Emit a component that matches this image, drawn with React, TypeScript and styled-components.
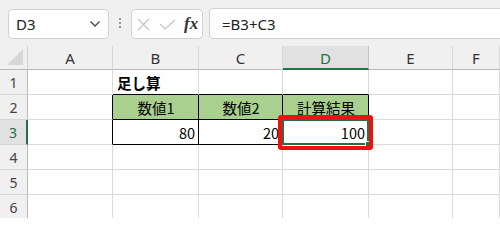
import styled, { createGlobalStyle } from "styled-components";

const GlobalStyle = createGlobalStyle`
  html, body {
    margin: 0;
    padding: 0;
    background: #ffffff;
    overflow: hidden;
  }
  * {
    box-sizing: border-box;
  }
`;

const GRID = "#dadada";
const INK = "#000000";
const GREEN = "#217346";

const columns = ["A", "B", "C", "D", "E", "F"];

type CellData = {
  text?: string;
  align?: "left" | "center" | "right";
  bold?: boolean;
  fill?: string;
  right?: string;
  bottom?: string;
  selected?: boolean;
};

const rows: CellData[][] = [
  [
    { right: GRID },
    { text: "足し算", bold: true, bottom: INK },
    { bottom: INK },
    { bottom: INK },
    {},
    {},
  ],
  [
    { right: INK },
    { text: "数値1", align: "center", fill: "#a9d08e", right: INK, bottom: INK },
    { text: "数値2", align: "center", fill: "#a9d08e", right: INK, bottom: INK },
    { text: "計算結果", align: "center", fill: "#a9d08e", right: INK, bottom: INK },
    {},
    {},
  ],
  [
    { right: INK },
    { text: "80", align: "right", right: INK, bottom: INK },
    { text: "20", align: "right", right: INK, bottom: INK },
    { text: "100", align: "right", right: INK, bottom: INK, selected: true },
    {},
    {},
  ],
  [{}, {}, {}, {}, {}, {}],
  [{}, {}, {}, {}, {}, {}],
  [{}, {}, {}, {}, {}, {}],
];

const App = () => {
  return (
    <Page>
      <GlobalStyle />
      <FormulaBar>
        <NameBox>
          <span>D3</span>
          <svg width="12" height="8" viewBox="0 0 12 8">
            <path d="M1.5 1.5 L6 6 L10.5 1.5" fill="none" stroke="#444" strokeWidth="1.3" />
          </svg>
        </NameBox>
        <Grip>
          <Dot />
          <Dot />
          <Dot />
        </Grip>
        <FxBox>
          <svg width="13" height="13" viewBox="0 0 13 13">
            <path d="M1 1 L12 12 M12 1 L1 12" stroke="#c4c4c4" strokeWidth="1.2" fill="none" />
          </svg>
          <svg width="17" height="11" viewBox="0 0 17 11">
            <path d="M1 5 L6 10 L16 1" stroke="#c4c4c4" strokeWidth="1.2" fill="none" />
          </svg>
          <Fx>fx</Fx>
        </FxBox>
        <FormulaInput>=B3+C3</FormulaInput>
      </FormulaBar>
      <Sheet>
        <Corner>
          <svg width="18" height="18" viewBox="0 0 18 18">
            <path d="M17 1 L17 17 L1 17 Z" fill="#d7d7d7" />
          </svg>
        </Corner>
        {columns.map((c) => (
          <ColHeader key={c} $active={c === "D"}>
            {c}
          </ColHeader>
        ))}
        {rows.map((row, r) => (
          <Row key={r} row={row} index={r + 1} />
        ))}
      </Sheet>
    </Page>
  );
};

const Row = ({ row, index }: { row: CellData[]; index: number }) => {
  return (
    <>
      <RowHeader $active={index === 3}>{index}</RowHeader>
      {row.map((cell, i) => (
        <Cell
          key={i}
          $align={cell.align || "left"}
          $bold={!!cell.bold}
          $fill={cell.fill || "#ffffff"}
          $right={cell.right || GRID}
          $bottom={cell.bottom || GRID}
          $raised={!!cell.selected}
        >
          {cell.text}
          {cell.selected && (
            <>
              <Selection>
                <FillHandle />
              </Selection>
              <Highlight />
            </>
          )}
        </Cell>
      ))}
    </>
  );
};

const Page = styled.div`
  width: 500px;
  height: 218px;
  overflow: hidden;
  background: #ffffff;
`;

const FormulaBar = styled.div`
  height: 46px;
  background: #f0f0f0;
  display: flex;
  align-items: flex-start;
  padding: 8px 0 0 8px;
  font-family: "Noto Sans", "Open Sans", sans-serif;
`;

const NameBox = styled.div`
  width: 101px;
  height: 30px;
  margin-top: 1px;
  background: #ffffff;
  border: 1px solid #d1d1d1;
  border-radius: 4px;
  display: flex;
  align-items: center;
  justify-content: space-between;
  padding: 0 7px 0 7px;
  font-size: 15px;
  color: #222;
`;

const Grip = styled.div`
  width: 22px;
  height: 30px;
  display: flex;
  flex-direction: column;
  align-items: center;
  justify-content: center;
  gap: 2px;
`;

const Dot = styled.div`
  width: 2px;
  height: 2px;
  border-radius: 1px;
  background: #777;
`;

const FxBox = styled.div`
  width: 72px;
  height: 30px;
  margin-top: 1px;
  background: #ffffff;
  border: 1px solid #d1d1d1;
  border-radius: 4px;
  display: flex;
  align-items: center;
  gap: 9px;
  padding-left: 5px;
`;

const Fx = styled.span`
  font-family: "Liberation Serif", serif;
  font-style: italic;
  font-weight: bold;
  font-size: 17px;
  color: #333;
  margin-left: -1px;
`;

const FormulaInput = styled.div`
  flex: 1;
  height: 31px;
  margin-left: 6px;
  margin-right: -8px;
  background: #ffffff;
  border: 1px solid #d1d1d1;
  border-radius: 4px;
  display: flex;
  align-items: center;
  padding-left: 12px;
  font-size: 15px;
  color: #222;
`;

const Sheet = styled.div`
  display: grid;
  grid-template-columns: 28px 85px 86px 84px 86px 84px 1fr;
  grid-template-rows: 24px;
  grid-auto-rows: 25px;
  font-family: "Noto Sans CJK JP", "Noto Sans", sans-serif;
`;

const Corner = styled.div`
  background: #f0f0f0;
  border-right: 1px solid #d0d0d0;
  border-bottom: 1px solid #b8b8b8;
  display: flex;
  align-items: flex-end;
  justify-content: flex-end;
  padding: 0 3px 3px 0;
`;

const ColHeader = styled.div<{ $active: boolean }>`
  background: ${(p) => (p.$active ? "#e1e1e1" : "#f0f0f0")};
  border-right: 1px solid ${(p) => (p.$active ? "#c6c6c6" : "#d6d6d6")};
  border-bottom: ${(p) => (p.$active ? `2px solid ${GREEN}` : "1px solid #b8b8b8")};
  color: ${(p) => (p.$active ? GREEN : "#333")};
  font-family: "Noto Sans", "Open Sans", sans-serif;
  font-size: 15px;
  display: flex;
  align-items: center;
  justify-content: center;
  padding-top: ${(p) => (p.$active ? "1px" : "0")};
`;

const RowHeader = styled.div<{ $active: boolean }>`
  background: ${(p) => (p.$active ? "#e1e1e1" : "#f0f0f0")};
  border-right: ${(p) => (p.$active ? `2px solid ${GREEN}` : "1px solid #b8b8b8")};
  border-bottom: 1px solid #d6d6d6;
  color: ${(p) => (p.$active ? GREEN : "#444")};
  font-family: "Noto Sans", "Open Sans", sans-serif;
  font-size: 14px;
  display: flex;
  align-items: center;
  justify-content: center;
`;

const Cell = styled.div<{
  $align: string;
  $bold: boolean;
  $fill: string;
  $right: string;
  $bottom: string;
  $raised: boolean;
}>`
  position: relative;
  z-index: ${(p) => (p.$raised ? 2 : "auto")};
  background: ${(p) => p.$fill};
  border-right: 1px solid ${(p) => p.$right};
  border-bottom: 1px solid ${(p) => p.$bottom};
  display: flex;
  align-items: center;
  justify-content: ${(p) =>
    p.$align === "center" ? "center" : p.$align === "right" ? "flex-end" : "flex-start"};
  padding: 0 3px 0 4px;
  font-size: 14.5px;
  font-weight: ${(p) => (p.$bold ? 700 : 400)};
  color: #000;
  white-space: nowrap;
`;

const Selection = styled.div`
  position: absolute;
  left: -1px;
  top: -1px;
  right: -1px;
  bottom: -1px;
  border: 2px solid ${GREEN};
`;

const FillHandle = styled.div`
  position: absolute;
  right: -4px;
  bottom: -4px;
  width: 6px;
  height: 6px;
  background: ${GREEN};
  border-left: 1px solid #fff;
  border-top: 1px solid #fff;
`;

const Highlight = styled.div`
  position: absolute;
  left: -5px;
  top: -5px;
  right: -5px;
  bottom: -6px;
  border: 4px solid #ee1111;
  border-radius: 3px;
`;

export default App;
